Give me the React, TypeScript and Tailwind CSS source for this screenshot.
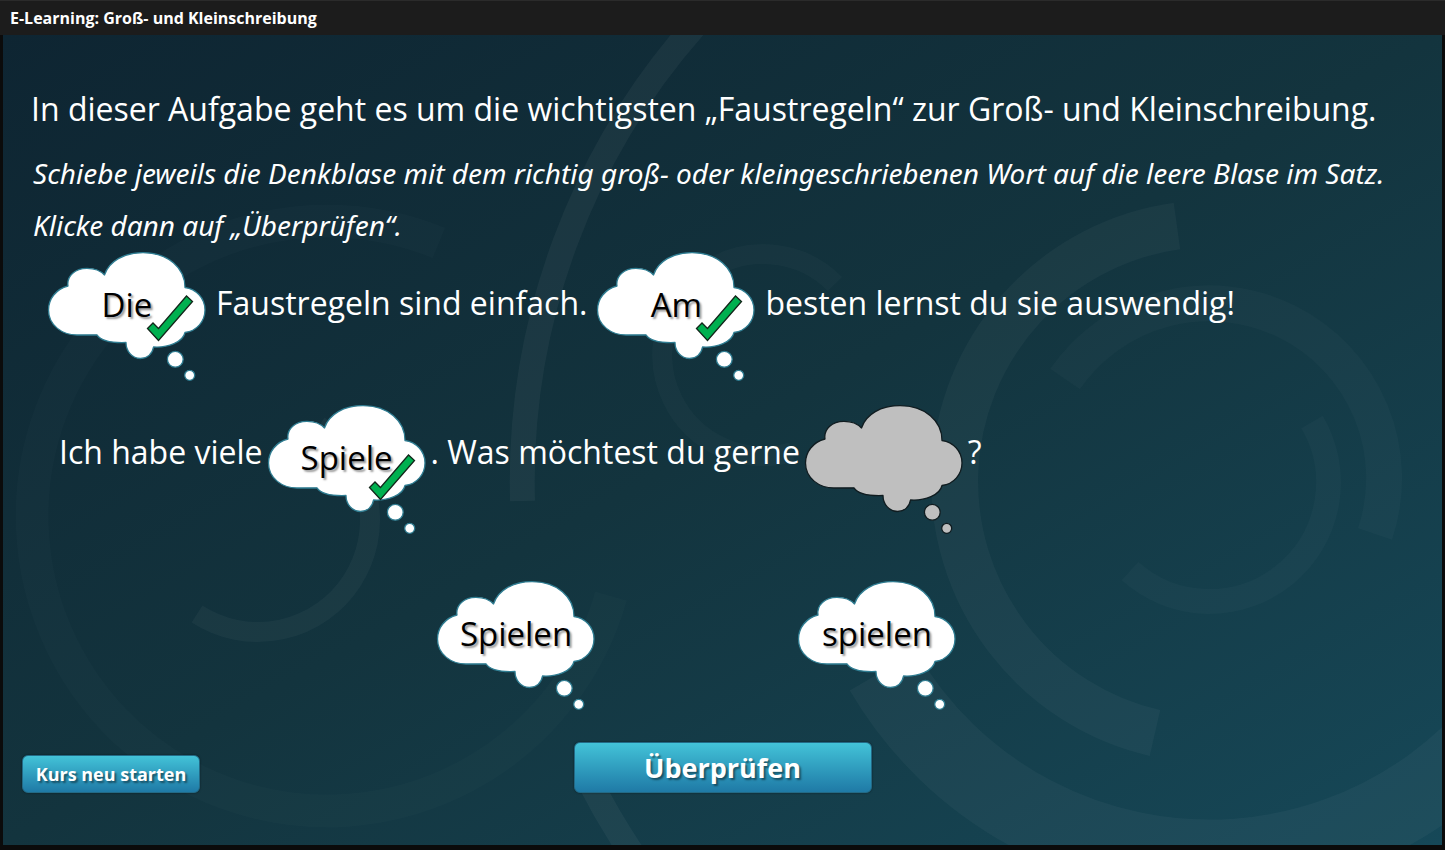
import type { ReactNode } from "react";

type BubbleTone = "word" | "empty";

const CLOUD_PATH =
  "M22 36C10 39 2.5 49 2.5 60C2.5 75 16 85 31 85L51 84.8C55 91 66 93 80 92.5C80 101 86 108.5 94.5 108.5C101 108.5 106.5 104 107.5 97C122 98 137 92 139 82.5C151 81 159 71 159 60C159 48 150 39 139 37.5C139 18 122 2.7 97 2.7C78 2.7 63 11 58.5 25C54 20 48 18.3 41 18.3C29 18.3 20.5 26 22 36Z";

function Cloud({ tone }: { tone: BubbleTone }) {
  const paint = tone === "empty" ? "fill-[#bfbfbf] stroke-[#101c20]" : "fill-white stroke-[#2f7d92]";
  return (
    <svg viewBox="0 1 162 131" aria-hidden="true" className={`absolute inset-0 h-full w-full ${paint}`}>
      <path d={CLOUD_PATH} strokeWidth="1.3" strokeLinejoin="round" />
      <circle cx="129.3" cy="109.3" r="7.9" strokeWidth="1.3" />
      <circle cx="143.7" cy="125.3" r="5" strokeWidth="1.3" />
    </svg>
  );
}

function Word({ children }: { children: ReactNode }) {
  return (
    <span className="relative text-[33px] leading-[44px] text-black [text-shadow:2px_2px_2px_rgba(0,0,0,0.4)]">
      {children}
    </span>
  );
}

function CheckMark({ place }: { place: string }) {
  return (
    <svg viewBox="0 0 48 48" role="img" aria-label="Richtig" className={`absolute size-12 ${place}`}>
      <path
        d="M1.5 33.5L7 28L12.5 33.5L40.5 1L46.5 6.5L12.5 45.5Z"
        fill="#00b050"
        stroke="#12261a"
        strokeWidth="1.3"
      />
    </svg>
  );
}

function Slot({ word, check }: { word?: string; check?: string }) {
  return (
    <div className="relative flex h-[131px] w-[162px] shrink-0 justify-center pt-8">
      <Cloud tone={word ? "word" : "empty"} />
      {word && <Word>{word}</Word>}
      {check && <CheckMark place={check} />}
    </div>
  );
}

function Choice({ word }: { word: string }) {
  return (
    <button type="button" className="relative flex h-[131px] w-[162px] shrink-0 cursor-grab justify-center pt-8">
      <Cloud tone="word" />
      <Word>{word}</Word>
    </button>
  );
}

function Backdrop() {
  return (
    <svg
      viewBox="3 35 1439 810"
      preserveAspectRatio="xMidYMid slice"
      aria-hidden="true"
      className="absolute inset-0 h-full w-full"
      fill="none"
      stroke="#ffffff"
    >
      <g strokeOpacity="0.035">
        <path d="M1177 226A258 258 0 0 0 1155 733" strokeWidth="47" />
        <path d="M883 671A378 378 0 0 0 1560 621" strokeWidth="77" />
      </g>
      <g strokeOpacity="0.022">
        <path d="M1065 379A175 175 0 0 1 1375 534" strokeWidth="36" />
        <path d="M1312 422A119 119 0 0 1 1130 571" strokeWidth="25" />
        <path d="M835 284A101 101 0 1 0 792 452" strokeWidth="20" />
      </g>
      <g strokeOpacity="0.045">
        <path d="M522.5 501A688 688 0 0 1 700 20" strokeWidth="25" />
        <path d="M589 780A688 688 0 0 0 640 865" strokeWidth="25" />
      </g>
      <g strokeOpacity="0.035">
        <path d="M319 426A112 112 0 0 1 197 614" strokeWidth="20" />
      </g>
      <g strokeOpacity="0.015">
        <path d="M439 243A295 295 0 1 0 611 596" strokeWidth="33" />
      </g>
    </svg>
  );
}

const ACTION =
  "rounded-md border border-[#236a86] bg-linear-to-b from-[#43c3d8] to-[#1f7aa6] font-bold text-white shadow-[0_0_2px_rgba(0,0,0,0.5)] [text-shadow:2px_2px_2px_rgba(0,0,0,0.45)]";

export default function App() {
  return (
    <div className="flex min-h-screen flex-col bg-[#0b0b0b] font-['Open_Sans','Noto_Sans',sans-serif] text-white">
      <header className="flex h-[35px] items-center border-t border-[#2b2b2b] bg-[#1c1c1c] px-[10px]">
        <h1 className="text-base font-bold">E-Learning: Groß- und Kleinschreibung</h1>
      </header>

      <main className="relative mx-[3px] mb-[5px] flex grow flex-col bg-linear-to-br from-[#0e2532] via-[#13343e] to-[#164858] pt-[52px] pb-[52px] text-[32px] leading-[44px]">
        <Backdrop />

        <div className="relative flex grow flex-col">
          <p className="pl-7">
            In dieser Aufgabe geht es um die wichtigsten „Faustregeln“ zur Groß- und Kleinschreibung.
          </p>
          <p className="mt-4 pl-[30px] font-['Noto_Sans','Open_Sans',sans-serif] text-[28px] leading-[52px] italic">
            Schiebe jeweils die Denkblase mit dem richtig groß- oder kleingeschriebenen Wort auf die leere Blase im Satz.
            <br />
            Klicke dann auf „Überprüfen“.
          </p>

          <div className="flex gap-2 pl-[43px]">
            <Slot word="Die" check="top-[44px] left-[100px]" />
            <span className="pt-[30px]">Faustregeln sind einfach.</span>
            <Slot word="Am" check="top-[44px] left-[100px]" />
            <span className="pt-[30px]">besten lernst du sie auswendig!</span>
          </div>

          <div className="mt-[22px] flex gap-[3px] pl-[56px]">
            <span className="pt-[26px]">Ich habe viele</span>
            <Slot word="Spiele" check="top-[50px] left-[102px]" />
            <span className="pt-[26px]">. Was möchtest du gerne</span>
            <Slot />
            <span className="pt-[26px]">?</span>
          </div>

          <div className="mt-[45px] flex justify-center gap-[199px] pr-[52px]">
            <Choice word="Spielen" />
            <Choice word="spielen" />
          </div>

          <div className="mt-auto grid grid-cols-[1fr_auto_1fr] items-end px-[19px] pt-[31px]">
            <button type="button" className={`h-[38px] w-[178px] justify-self-start text-lg leading-7 ${ACTION}`}>
              Kurs neu starten
            </button>
            <button type="button" className={`h-[51px] w-[298px] text-[27px] leading-9 ${ACTION}`}>
              Überprüfen
            </button>
          </div>
        </div>
      </main>
    </div>
  );
}
